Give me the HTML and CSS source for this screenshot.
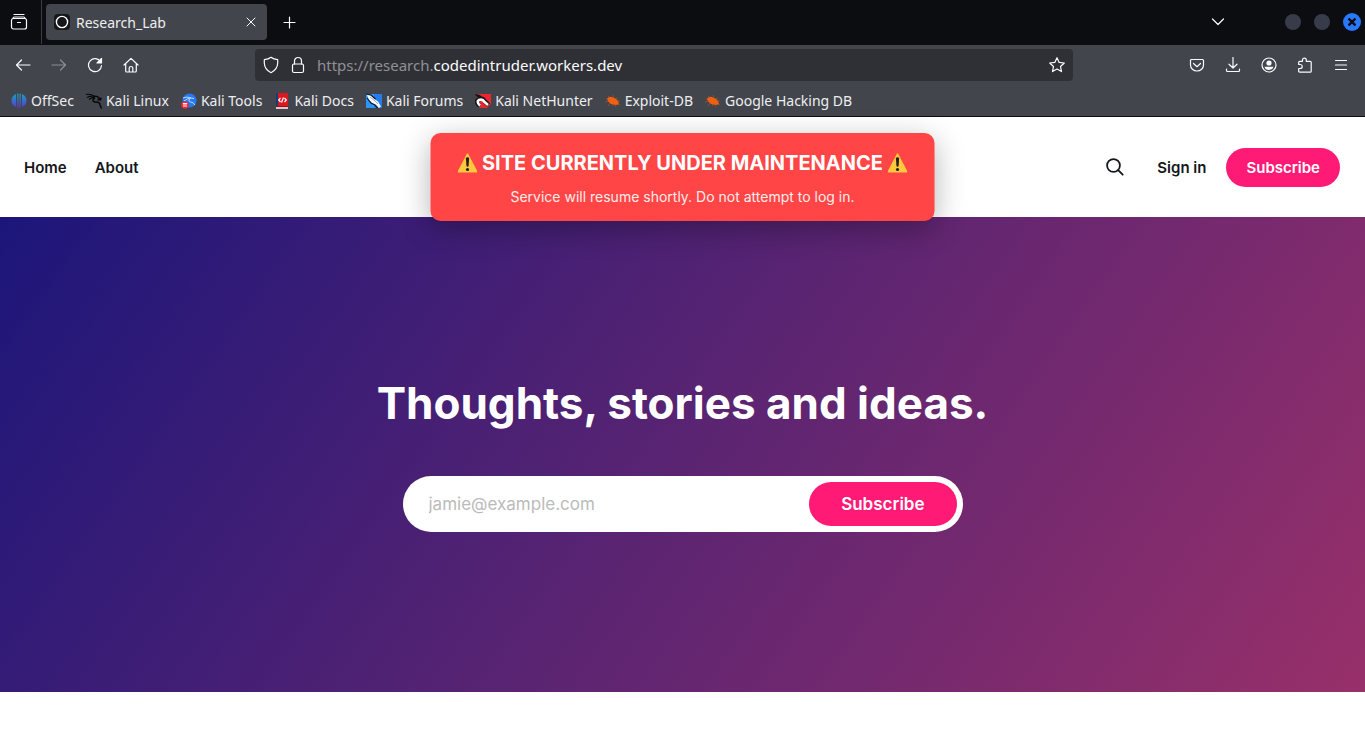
FILE: index.html
```html
<!DOCTYPE html>
<html lang="en">
<head>
    <meta charset="UTF-8">
    <meta name="viewport" content="width=device-width, initial-scale=1.0">
    <title>Research_Lab</title>
    <link rel="stylesheet" href="styles.css">
</head>
<body>
    <div class="browser">
        <div class="tab-bar">
            <button class="view-btn" aria-label="Firefox View">
                <svg class="line" width="18" height="18" viewBox="0 0 18 18"><path d="M4 1.500h10"/><rect x="1.500" y="5.500" width="15" height="10.500" rx="2"/><path d="M3 5.500q0-1.500 1.500-1.500h9q1.500 0 1.500 1.500M7.500 9.500h3"/></svg>
            </button>
            <div class="tab">
                <svg width="16" height="16" viewBox="0 0 16 16"><rect width="16" height="16" rx="4" fill="#15171a"/><circle cx="8" cy="8" r="5.600" fill="none" stroke="#fff" stroke-width="1.400"/></svg>
                <span class="tab-title">Research_Lab</span>
                <button class="tab-close" aria-label="Close tab">
                    <svg class="line thin" width="10" height="10" viewBox="0 0 10 10"><path d="M1 1l8 8M9 1L1 9"/></svg>
                </button>
            </div>
            <button class="new-tab" aria-label="New tab">
                <svg class="line" width="13" height="13" viewBox="0 0 13 13"><path d="M6.500 1v11M1 6.500h11"/></svg>
            </button>
            <div class="window-controls">
                <button class="list-tabs" aria-label="List all tabs">
                    <svg class="line" width="14" height="8" viewBox="0 0 14 8"><path d="M1.500 1L7 6.500 12.500 1"/></svg>
                </button>
                <button class="win-btn" aria-label="Minimize"></button>
                <button class="win-btn" aria-label="Maximize"></button>
                <button class="win-btn win-close" aria-label="Close">
                    <svg width="8" height="8" viewBox="0 0 8 8"><path d="M.5.5l7 7M7.500.5l-7 7" stroke="#0d0e12" stroke-width="2.400"/></svg>
                </button>
            </div>
        </div>

        <div class="toolbar">
            <div class="nav-buttons">
                <button aria-label="Back"><svg class="line" width="16" height="16" viewBox="0 0 16 16"><path d="M6.500 3L1.500 8l5 5M1.500 8H15"/></svg></button>
                <button class="disabled" aria-label="Forward"><svg class="line" width="16" height="16" viewBox="0 0 16 16"><path d="M9.500 3l5 5-5 5M14.500 8H1"/></svg></button>
                <button aria-label="Reload"><svg class="line" width="16" height="16" viewBox="0 0 16 16"><path d="M13.700 5A6.500 6.500 0 1 0 14.500 8.500"/><path d="M14.500 1.500v4.500H10z" fill="#fbfbfe"/></svg></button>
                <button aria-label="Home"><svg class="line" width="16" height="16" viewBox="0 0 16 16"><path d="M1 8l7-6.600L15 8M2.700 6.500V14q0 1 1 1h8.600q1 0 1-1V6.500M6.200 15v-4q0-1.500 1.800-1.500t1.800 1.500v4"/></svg></button>
            </div>
            <div class="url-bar">
                <svg class="line" width="16" height="18" viewBox="0 0 16 18"><path d="M8 1.300Q10.500 3.500 14.700 3.700V7Q14.500 13.500 8 16.700 1.500 13.500 1.300 7V3.700Q5.500 3.500 8 1.300z"/></svg>
                <svg class="line" width="14" height="18" viewBox="0 0 14 18"><rect x="1.500" y="8" width="11" height="8.500" rx="1.500"/><path d="M3.500 8V5a3.500 3.500 0 0 1 7 0v3"/></svg>
                <span class="url">https://research.<b>codedintruder.workers.dev</b></span>
                <button class="star" aria-label="Bookmark this page"><svg class="line" width="18" height="18" viewBox="0 0 18 18"><path d="M9 1.700l2.200 4.700 5.100.6-3.800 3.500 1 5.100L9 13.100l-4.500 2.500 1-5.100L1.700 7l5.100-.6z"/></svg></button>
            </div>
            <div class="tools">
                <button aria-label="Pocket"><svg class="line" width="16" height="16" viewBox="0 0 16 16"><path d="M1.500 3.500q0-1 1-1h11q1 0 1 1V8a6.500 6 0 0 1-13 0zM4.500 6.500L8 9.700l3.500-3.200"/></svg></button>
                <button aria-label="Downloads"><svg class="line" width="16" height="16" viewBox="0 0 16 16"><path d="M8 .5v10.500M4 7.200L8 11l4-3.800M1.500 12v1.500q0 1 1 1h11q1 0 1-1V12"/></svg></button>
                <button aria-label="Account"><svg class="line" width="16" height="16" viewBox="0 0 16 16"><circle cx="8" cy="8" r="7"/><circle cx="8" cy="6" r="2.600" fill="#fbfbfe" stroke="none"/><path d="M3.500 9.700h9Q11.800 12.900 8 12.900T3.500 9.700z" fill="#fbfbfe" stroke="none"/></svg></button>
                <button aria-label="Extensions"><svg class="line" width="16" height="16" viewBox="0 0 16 16"><path d="M1.700 7.500V5.300q0-1 1-1h2.800V3a1.900 1.900 0 0 1 3.800 0v1.300h3.900q1 0 1 1v8.900q0 1-1 1H2.700q-1 0-1-1v-2.700h1.500a2 2 0 0 0 0-4z"/></svg></button>
                <button aria-label="Menu"><svg class="line" width="16" height="16" viewBox="0 0 16 16"><path d="M2.500 3.500h11M2.500 8h11M2.500 12.500h11"/></svg></button>
            </div>
        </div>

        <nav class="bookmarks" aria-label="Bookmarks">
            <a href="#">
                <svg width="16" height="16" viewBox="0 0 16 16"><defs><linearGradient id="offsec" gradientUnits="userSpaceOnUse" x1="0" y1="0" x2="0" y2="16"><stop offset="0" stop-color="#14a8bd"/><stop offset=".5" stop-color="#376ccb"/><stop offset="1" stop-color="#6430d2"/></linearGradient></defs><path d="M5 1v13Q.5 12 .5 7.500T5 1zM7.500.5v15.300L6.200 14V.8zM8.500.5v15.300L9.800 14V.8zM11 1v13q4.500-2 4.500-6.500T11 1z" fill="url(#offsec)"/></svg>
                OffSec
            </a>
            <a href="#">
                <svg width="16" height="16" viewBox="0 0 16 16" fill="none" stroke="#08090a"><path d="M0 1.500q5-1 8.500 2M1 4.500Q5 2.300 8.500 3.500M3 6.500q3-2.500 6-2" stroke-width="1.100"/><path d="M8 3.500q3-1 5 1.500l2 .5-.5 1.500-3-.5M9 5q-4 2-.5 4 5.500-.5 5.500 3l1.500 3.500" stroke-width="1.500"/></svg>
                Kali Linux
            </a>
            <a href="#">
                <svg width="16" height="16" viewBox="0 0 16 16"><circle cx="8.500" cy="7.500" r="7" fill="#2878f3"/><path d="M2 5q4-2 8 0l3 .5M3 8q4-3 7-3M8.500 6q-2 2 1 3 3 0 4.500 3" fill="none" stroke="#b9dcff"/><circle cx="4" cy="12" r="3.800" fill="#ee2934"/><path d="M1.800 10.500h4.400M3 10.500v3.500M5 10.500v3.500" stroke="#fff"/></svg>
                Kali Tools
            </a>
            <a href="#">
                <svg width="16" height="16" viewBox="0 0 16 16"><path d="M2 0h12v16H2z" fill="#db1720"/><path d="M2 0h2v16H2z" fill="#193a78"/><path d="M2 14h12v2H2z" fill="#d9c9cc"/><path d="M2 13h12v1H2z" fill="#a40d15"/><path d="M6.500 5L4.700 7l1.800 2M10.500 5l1.800 2-1.800 2M9.500 4.500l-2 5" fill="none" stroke="#fff" stroke-width="1.200"/></svg>
                Kali Docs
            </a>
            <a href="#">
                <svg width="16" height="16" viewBox="0 0 16 16"><path d="M0 1h16v14H0z" fill="#247cef"/><path d="M0 1h8v14H0z" fill="#2a96fb"/><path d="M1 2l4 .5 4 4 3 2 3 5-2 1.500-3-3-3-1-4-4z" fill="#f7f9fa"/><path d="M0 1l5 1 4.500 4M1 5l4 5 4 2 2.500 3" fill="none" stroke="#15171a" stroke-width="1.200"/><path d="M4 4l5 4 3 3" fill="none" stroke="#8b949a" stroke-width=".8"/></svg>
                Kali Forums
            </a>
            <a href="#">
                <svg width="16" height="16" viewBox="0 0 16 16"><path d="M3 1h13v10l-4 4H5L1 8z" fill="#ee242e"/><path d="M0 1l5 1 3 3H4L1 3z" fill="#15171a"/><path d="M4.500 13Q0 8.500 3.500 6.500q4-2 6 1.500l4 4" fill="none" stroke="#15171a" stroke-width="4.500"/><path d="M5 12.500Q1 8.500 4 7q3.500-1.500 5.500 2l3.500 3" fill="none" stroke="#fff" stroke-width="2.600"/></svg>
                Kali NetHunter
            </a>
            <a href="#">
                <svg width="16" height="16" viewBox="0 0 16 16"><path d="M3 3l2 2M8 2l1 3M13 5l-3 1M1 6h4M0 9l4-1M3 13l2-3M8 13l-1-3M15 8h-3M15 12l-3-1M11 14l-1-2" stroke="#8d5134" stroke-width=".9"/><path d="M2 6q2-3 5-2l4 2q3 2 3 5l-3 1-5-1q-3-2-4-5z" fill="#f2600f"/></svg>
                Exploit-DB
            </a>
            <a href="#">
                <svg width="16" height="16" viewBox="0 0 16 16"><path d="M3 3l2 2M8 2l1 3M13 5l-3 1M1 6h4M0 9l4-1M3 13l2-3M8 13l-1-3M15 8h-3M15 12l-3-1M11 14l-1-2" stroke="#8d5134" stroke-width=".9"/><path d="M2 6q2-3 5-2l4 2q3 2 3 5l-3 1-5-1q-3-2-4-5z" fill="#f2600f"/></svg>
                Google Hacking DB
            </a>
        </nav>
    </div>

    <div class="site">
        <div class="notice" role="alert">
            <p class="notice-title">
                <svg width="20" height="20" viewBox="0 0 20 20"><path d="M9.200.9q.8-1.300 1.600 0l8.900 17q.6 1.600-1 1.600H1.300q-1.600 0-1-1.600z" fill="#ffc83d"/><path d="M8.400 5.500q0-1.300 1.600-1.300t1.600 1.300l-.5 7q-.1 1.200-1.100 1.200t-1.100-1.200z" fill="#231f20"/><circle cx="10" cy="16.500" r="1.600" fill="#231f20"/></svg>
                <span>SITE CURRENTLY UNDER MAINTENANCE</span>
                <svg width="20" height="20" viewBox="0 0 20 20"><path d="M9.200.9q.8-1.300 1.600 0l8.900 17q.6 1.600-1 1.600H1.300q-1.600 0-1-1.600z" fill="#ffc83d"/><path d="M8.400 5.500q0-1.300 1.600-1.300t1.600 1.300l-.5 7q-.1 1.200-1.100 1.200t-1.100-1.200z" fill="#231f20"/><circle cx="10" cy="16.500" r="1.600" fill="#231f20"/></svg>
            </p>
            <p class="notice-text">Service will resume shortly. Do not attempt to log in.</p>
        </div>

        <header class="site-header">
            <nav class="menu">
                <a href="#">Home</a>
                <a href="#">About</a>
            </nav>
            <div class="actions">
                <button class="search" aria-label="Search this site">
                    <svg width="20" height="20" viewBox="0 0 20 20" fill="none" stroke="#15171a" stroke-width="1.800" stroke-linecap="round"><circle cx="8.500" cy="8.500" r="6.400"/><path d="M13.200 13.200l4.500 4.500"/></svg>
                </button>
                <a class="signin" href="#">Sign in</a>
                <a class="subscribe" href="#">Subscribe</a>
            </div>
        </header>

        <main class="hero">
            <h1>Thoughts, stories and ideas.</h1>
            <form class="signup">
                <input type="email" placeholder="jamie@example.com" aria-label="Email address">
                <button type="submit">Subscribe</button>
            </form>
        </main>
    </div>
</body>
</html>
```

FILE: styles.css
```css
* {
    box-sizing: border-box;
}

body {
    margin: 0;
    background: #fff;
    color: #15171a;
    font-family: Inter, sans-serif;
}

a {
    color: inherit;
    text-decoration: none;
}

button {
    display: flex;
    align-items: center;
    justify-content: center;
    padding: 0;
    border: none;
    background: none;
    color: inherit;
    cursor: pointer;
}

svg {
    display: block;
    flex: none;
}

.line {
    fill: none;
    stroke: #fbfbfe;
    stroke-width: 1.2;
    stroke-linecap: round;
    stroke-linejoin: round;
}

.thin {
    stroke-width: 1;
}

/* browser */
.browser {
    background: #42454c;
    color: #eeeef0;
    font-family: "Noto Sans", sans-serif;
    font-size: 14px;
    border-bottom: 1px solid #0c0d11;
}

.tab-bar {
    display: flex;
    align-items: center;
    height: 45px;
    padding-bottom: 1px;
    background: #0c0d11;
}

.view-btn {
    width: 42px;
    height: 44px;
    padding-right: 4px;
    border-right: 1px solid #3a3c42;
}

.tab {
    display: flex;
    align-items: center;
    gap: 6px;
    width: 221px;
    height: 36px;
    margin-left: 4px;
    padding: 0 10px 0 8px;
    border-radius: 4px;
    background: #42454c;
}

.tab-title {
    flex: 1;
}

.tab-close {
    width: 12px;
    height: 20px;
}

.new-tab {
    width: 32px;
    height: 32px;
    margin-left: 6px;
}

.window-controls {
    display: flex;
    align-items: center;
    gap: 13px;
    margin-left: auto;
    padding-right: 4px;
}

.list-tabs {
    width: 32px;
    height: 32px;
    margin-right: 38px;
}

.win-btn {
    width: 16px;
    height: 16px;
    border-radius: 50%;
    background: #383c4a;
}

.win-close {
    width: 18px;
    height: 18px;
    background: #2777ff;
}

.toolbar {
    display: flex;
    align-items: center;
    height: 40px;
    padding: 0 16px 0 15px;
}

.nav-buttons, .tools {
    display: flex;
    gap: 20px;
}

.disabled {
    opacity: 0.4;
}

.url-bar {
    display: flex;
    flex: 1;
    align-items: center;
    gap: 12px;
    height: 32px;
    margin: 0 116px;
    padding: 0 7px 0 8px;
    border-radius: 4px;
    background: #2f3035;
}

.url {
    flex: 1;
    color: #8f9096;
    font-size: 15px;
}

.url b {
    color: #fbfbfe;
    font-weight: 400;
}

.bookmarks {
    display: flex;
    align-items: center;
    gap: 12px;
    height: 31px;
    padding-left: 11px;
    white-space: nowrap;
}

.bookmarks a {
    display: flex;
    align-items: center;
    gap: 4px;
}

/* site */
.site {
    position: relative;
}

.site-header {
    display: flex;
    align-items: center;
    justify-content: space-between;
    height: 100px;
    padding: 0 25px 0 24px;
    font-size: 15px;
    font-weight: 600;
}

.menu {
    display: flex;
    gap: 28px;
}

.actions {
    display: flex;
    align-items: center;
}

.search {
    width: 32px;
    height: 32px;
    margin-right: 26px;
}

.signin {
    margin-right: 20px;
}

.subscribe {
    padding: 10px 20px;
    border-radius: 20px;
    background: #ff1a75;
    color: #fff;
    line-height: 19px;
}

/* maintenance notice, floats over the header */
.notice {
    position: absolute;
    top: 16px;
    left: 50%;
    transform: translateX(-50%);
    padding: 16px 27px 14px;
    border-radius: 10px;
    background: #ff4545;
    box-shadow: 0 8px 30px rgba(0, 0, 0, 0.3);
    color: #fff;
    text-align: center;
    white-space: nowrap;
}

.notice p {
    margin: 0;
}

.notice-title {
    display: flex;
    align-items: center;
    justify-content: center;
    gap: 5px;
    font-size: 20px;
    font-weight: 700;
    line-height: 28px;
}

.notice .notice-text {
    margin-top: 10px;
    font-size: 14px;
    line-height: 20px;
    opacity: 0.9;
}

.hero {
    display: flex;
    flex-direction: column;
    align-items: center;
    padding: 160px 24px;
    background: linear-gradient(125deg, #1c167a, #5a2472 50%, #98306a);
}

.hero h1 {
    margin: 0 0 47px;
    color: #fff;
    font-size: 44px;
    font-weight: 700;
    line-height: 52px;
}

.signup {
    display: flex;
    width: 100%;
    max-width: 560px;
    height: 56px;
    padding: 6px;
    border-radius: 28px;
    background: #fff;
}

.signup input {
    flex: 1;
    min-width: 0;
    padding: 0 20px;
    border: none;
    outline: none;
    background: transparent;
    color: #15171a;
    font-family: inherit;
    font-size: 17px;
}

.signup input::placeholder {
    color: #bbb;
}

.signup button {
    padding: 0 32px;
    border-radius: 22px;
    background: #ff1a75;
    color: #fff;
    font-family: inherit;
    font-size: 17px;
    font-weight: 600;
}
```
